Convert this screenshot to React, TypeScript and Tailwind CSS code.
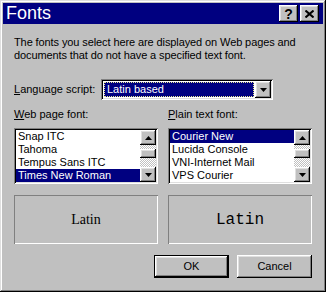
const RAISED =
  "shadow-[inset_-1px_-1px_#000,inset_1px_1px_#fff,inset_-2px_-2px_#808080,inset_2px_2px_#dfdfdf]";
const SUNKEN =
  "shadow-[inset_1px_1px_#808080,inset_-1px_-1px_#fff,inset_2px_2px_#000,inset_-2px_-2px_#dfdfdf]";

const WEB_FONTS = ["Snap ITC", "Tahoma", "Tempus Sans ITC", "Times New Roman"];
const PLAIN_FONTS = ["Courier New", "Lucida Console", "VNI-Internet Mail", "VPS Courier"];

function Arrow({ up }: { up?: boolean }) {
  return (
    <svg width="7" height="4" viewBox="0 0 7 4">
      <path d={up ? "M3.5 0 L7 4 L0 4 Z" : "M0 0 L7 0 L3.5 4 Z"} fill="#000" />
    </svg>
  );
}

function ScrollBar() {
  return (
    <div className="flex w-[16px] flex-col">
      <div className={`flex h-[15px] items-center justify-center bg-[#c0c0c0] ${RAISED}`}>
        <Arrow up />
      </div>
      <div className="h-[4px] bg-[repeating-conic-gradient(#c0c0c0_0%_25%,#ffffff_0%_50%)] bg-[length:2px_2px]" />
      <div className={`h-[9px] bg-[#c0c0c0] ${RAISED}`} />
      <div className="flex-1 bg-[repeating-conic-gradient(#c0c0c0_0%_25%,#ffffff_0%_50%)] bg-[length:2px_2px]" />
      <div className={`flex h-[15px] items-center justify-center bg-[#c0c0c0] ${RAISED}`}>
        <Arrow />
      </div>
    </div>
  );
}

function FontList({ items, selected }: { items: string[]; selected: string }) {
  return (
    <div className={`flex h-[56px] w-[144px] bg-white p-[2px] ${SUNKEN}`}>
      <div className="flex-1">
        {items.map((f) => (
          <div
            key={f}
            className={`h-[13px] pl-[2px] leading-[13px] ${
              f === selected ? "bg-[#000080] text-white" : "text-black"
            }`}
          >
            {f}
          </div>
        ))}
      </div>
      <ScrollBar />
    </div>
  );
}

export default function App() {
  return (
    <div
      className={`flex h-[292px] w-[326px] flex-col bg-[#c0c0c0] p-[3px] text-[11px] text-black shadow-[inset_-1px_-1px_#000,inset_1px_1px_#dfdfdf,inset_-2px_-2px_#808080,inset_2px_2px_#fff] font-['Liberation_Sans',Arial,sans-serif]`}
    >
      {/* Title bar */}
      <div className="flex h-[21px] items-center bg-[#000080] pl-[3px] pr-[4px]">
        <span className="flex-1 text-[18px] leading-[21px] text-white">Fonts</span>
        <div className="flex gap-[2px]">
          <div
            className={`flex h-[17px] w-[19px] items-center justify-center bg-[#c0c0c0] text-[14px] font-bold leading-none ${RAISED}`}
          >
            ?
          </div>
          <div className={`flex h-[17px] w-[19px] items-center justify-center bg-[#c0c0c0] ${RAISED}`}>
            <svg width="9" height="8" viewBox="0 0 9 8">
              <path d="M0.5 0.5 L8.5 7.5 M8.5 0.5 L0.5 7.5" stroke="#000" strokeWidth="2" />
            </svg>
          </div>
        </div>
      </div>

      {/* Body */}
      <div className="flex flex-1 flex-col px-[11px]">
        <p className="mt-[12px] leading-[13px] tracking-[-0.1px]">
          The fonts you select here are displayed on Web pages and
          <br />
          documents that do not have a specified text font.
        </p>

        <div className="mt-[17px] flex h-[21px] items-center">
          <span className="w-[87px]">
            <u>L</u>anguage script:
          </span>
          <div className={`flex h-[21px] w-[172px] items-center bg-white p-[2px] ${SUNKEN}`}>
            <div className="flex h-full flex-1 p-[1px]">
              <div className="flex flex-1 items-center border border-dotted border-[#e8e890] bg-[#000080] pl-[2px] text-white">
                Latin based
              </div>
            </div>
            <div className={`flex h-full w-[16px] items-center justify-center bg-[#c0c0c0] ${RAISED}`}>
              <Arrow />
            </div>
          </div>
        </div>

        <div className="mt-[8px] flex gap-[10px] leading-[13px]">
          <span className="w-[144px]">
            <u>W</u>eb page font:
          </span>
          <span className="w-[144px]">
            <u>P</u>lain text font:
          </span>
        </div>

        <div className="mt-[7px] flex gap-[10px]">
          <FontList items={WEB_FONTS} selected="Times New Roman" />
          <FontList items={PLAIN_FONTS} selected="Courier New" />
        </div>

        <div className="mt-[11px] flex gap-[10px]">
          <div className="flex h-[49px] w-[144px] items-center justify-center shadow-[inset_1px_1px_#808080,inset_-1px_-1px_#fff] font-['Liberation_Serif','Times_New_Roman',serif] text-[14px]">
            Latin
          </div>
          <div className="flex h-[49px] w-[144px] items-center justify-center shadow-[inset_1px_1px_#808080,inset_-1px_-1px_#fff] font-['Liberation_Mono','Courier_New',monospace] text-[16px]">
            Latin
          </div>
        </div>

        <div className="mt-[11px] flex justify-end gap-[8px]">
          <div className="h-[23px] w-[75px] border border-black">
            <div className={`flex h-full items-center justify-center bg-[#c0c0c0] ${RAISED}`}>OK</div>
          </div>
          <div className={`flex h-[23px] w-[75px] items-center justify-center bg-[#c0c0c0] ${RAISED}`}>
            Cancel
          </div>
        </div>
      </div>
    </div>
  );
}
